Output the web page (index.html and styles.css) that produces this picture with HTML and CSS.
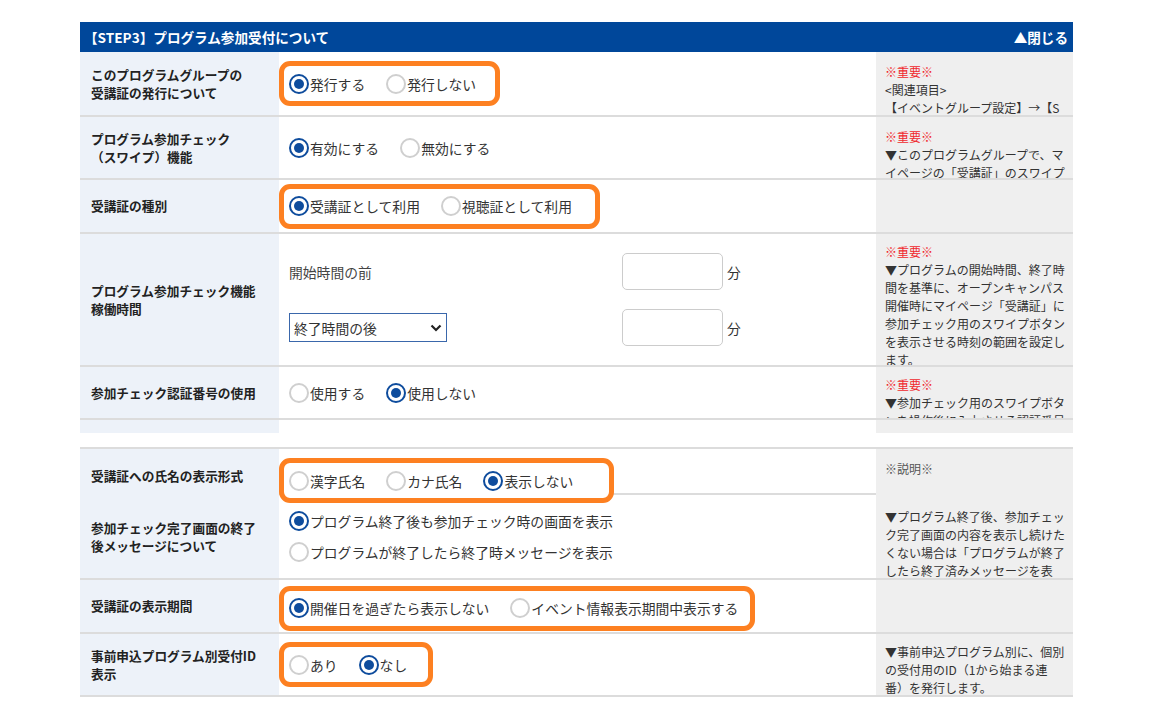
FILE: index.html
```html
<!DOCTYPE html>
<html lang="ja">
<head>
<meta charset="utf-8">
<title>STEP3 プログラム参加受付について</title>
<link rel="stylesheet" href="styles.css">
</head>
<body>
<div class="panel">
  <div class="panel-head">
    <span class="panel-title">【STEP3】プログラム参加受付について</span>
    <span class="panel-close">▲閉じる</span>
  </div>

  <div class="table">
    <div class="row h65">
      <div class="th">このプログラムグループの<br>受講証の発行について</div>
      <div class="td">
        <div class="opts hl hl-1">
          <span class="opt"><span class="radio on"></span>発行する</span>
          <span class="opt"><span class="radio"></span>発行しない</span>
        </div>
      </div>
      <div class="note"><span class="red">※重要※</span><br>&lt;関連項目&gt;<br>【イベントグループ設定】→【S</div>
    </div>

    <div class="row h63">
      <div class="th">プログラム参加チェック<br>（スワイプ）機能</div>
      <div class="td">
        <div class="opts">
          <span class="opt"><span class="radio on"></span>有効にする</span>
          <span class="opt"><span class="radio"></span>無効にする</span>
        </div>
      </div>
      <div class="note"><span class="red">※重要※</span><br>▼このプログラムグループで、マ<br>イページの「受講証」のスワイプ<br>ボタンを表示するかを設定します。</div>
    </div>

    <div class="row h54">
      <div class="th">受講証の種別</div>
      <div class="td">
        <div class="opts hl hl-3">
          <span class="opt"><span class="radio on"></span>受講証として利用</span>
          <span class="opt"><span class="radio"></span>視聴証として利用</span>
        </div>
      </div>
      <div class="note"></div>
    </div>

    <div class="row h133">
      <div class="th">プログラム参加チェック機能<br>稼働時間</div>
      <div class="td">
        <div class="time-grid">
          <span class="time-label">開始時間の前</span>
          <span class="num-input"></span>
          <span class="unit">分</span>
          <div class="select">
            <span>終了時間の後</span>
            <svg class="chev" width="12" height="8" viewBox="0 0 12 8"><path d="M1.5 1.5 L6 6 L10.5 1.5" fill="none" stroke="#222" stroke-width="2.2"/></svg>
          </div>
          <span class="num-input"></span>
          <span class="unit">分</span>
        </div>
      </div>
      <div class="note tight"><span class="red">※重要※</span><br>▼プログラムの開始時間、終了時<br>間を基準に、オープンキャンパス<br>開催時にマイページ「受講証」に<br>参加チェック用のスワイプボタン<br>を表示させる時刻の範囲を設定し<br>ます。</div>
    </div>

    <div class="row h53">
      <div class="th">参加チェック認証番号の使用</div>
      <div class="td">
        <div class="opts">
          <span class="opt"><span class="radio"></span>使用する</span>
          <span class="opt"><span class="radio on"></span>使用しない</span>
        </div>
      </div>
      <div class="note tight"><span class="red">※重要※</span><br>▼参加チェック用のスワイプボタ<br>ンを操作後に入力させる認証番号</div>
    </div>

    <div class="row h13 no-border">
      <div class="th"></div>
      <div class="td"></div>
      <div class="note"></div>
    </div>
  </div>

  <div class="table table-2">
    <div class="row h46">
      <div class="th">受講証への氏名の表示形式</div>
      <div class="td">
        <div class="opts hl hl-6">
          <span class="opt"><span class="radio"></span>漢字氏名</span>
          <span class="opt"><span class="radio"></span>カナ氏名</span>
          <span class="opt"><span class="radio on"></span>表示しない</span>
        </div>
      </div>
      <div class="note gray">※説明※</div>
    </div>

    <div class="row h85">
      <div class="th">参加チェック完了画面の終了<br>後メッセージについて</div>
      <div class="td">
        <div class="opts col">
          <span class="opt"><span class="radio on"></span>プログラム終了後も参加チェック時の画面を表示</span>
          <span class="opt"><span class="radio"></span>プログラムが終了したら終了時メッセージを表示</span>
        </div>
      </div>
      <div class="note loose">▼プログラム終了後、参加チェッ<br>ク完了画面の内容を表示し続けた<br>くない場合は「プログラムが終了<br>したら終了済みメッセージを表<br>示」を選択してください。</div>
    </div>

    <div class="row h54">
      <div class="th">受講証の表示期間</div>
      <div class="td">
        <div class="opts hl hl-8">
          <span class="opt"><span class="radio on"></span>開催日を過ぎたら表示しない</span>
          <span class="opt"><span class="radio"></span>イベント情報表示期間中表示する</span>
        </div>
      </div>
      <div class="note"></div>
    </div>

    <div class="row h63">
      <div class="th">事前申込プログラム別受付ID<br>表示</div>
      <div class="td">
        <div class="opts hl hl-9">
          <span class="opt"><span class="radio"></span>あり</span>
          <span class="opt"><span class="radio on"></span>なし</span>
        </div>
      </div>
      <div class="note tight">▼事前申込プログラム別に、個別<br>の受付用のID（1から始まる連<br>番）を発行します。</div>
    </div>
  </div>
</div>
</body>
</html>
```

FILE: styles.css
```css
* {
  box-sizing: border-box;
}

body {
  margin: 0;
  background: #ffffff;
  font-family: "Noto Sans CJK JP", "Noto Sans", sans-serif;
  color: #333333;
}

.panel {
  width: 993px;
  margin: 22px 0 0 80px;
}

.panel-head {
  height: 30px;
  background: #00479a;
  color: #ffffff;
  display: flex;
  align-items: center;
  justify-content: space-between;
  padding: 0 5px 0 4px;
  font-size: 13.6px;
  font-weight: 700;
  line-height: 18px;
}

.table-2 {
  margin-top: 14px;
  border-top: 2px solid #dcdcdc;
}

.row {
  display: grid;
  grid-template-columns: 199px 597px 197px;
  border-bottom: 2px solid #dcdcdc;
}

.row.no-border {
  border-bottom: 0;
}

.h13 { height: 13px; }
.h46 { height: 46px; }
.h53 { height: 53px; }
.h54 { height: 54px; }
.h63 { height: 63px; }
.h65 { height: 65px; }
.h85 { height: 85px; }
.h133 { height: 133px; }

.th {
  background: #edf2f9;
  display: flex;
  align-items: center;
  padding-left: 11px;
  font-size: 12.7px;
  line-height: 18px;
  font-weight: 700;
  color: #222222;
}

.td {
  display: flex;
  align-items: center;
  padding-left: 10px;
  font-size: 13.8px;
  line-height: 20px;
  color: #333333;
}

.note {
  background: #efefef;
  padding: 11px 4px 0 9px;
  overflow: hidden;
  white-space: nowrap;
  font-size: 12px;
  line-height: 18px;
  color: #333333;
}

.note.tight {
  padding-top: 9px;
}

.note.loose {
  padding-top: 13px;
}

.note.gray {
  color: #555555;
}

.red {
  color: #f0282d;
}

.opts {
  display: flex;
  align-items: center;
  gap: 21px;
}

.opts.col {
  flex-direction: column;
  align-items: flex-start;
  gap: 11px;
}

.opt {
  display: flex;
  align-items: center;
  white-space: nowrap;
}

.radio {
  position: relative;
  flex: none;
  width: 20px;
  height: 20px;
  border-radius: 50%;
  border: 2px solid #cfcfcf;
  background: #ffffff;
  margin-right: 1px;
}

.radio.on {
  border-color: #0e4c9d;
}

.radio.on::after {
  content: "";
  position: absolute;
  inset: 3px;
  border-radius: 50%;
  background: #0e4c9d;
}

.hl {
  height: 45px;
  margin-left: -10px;
  padding-left: 5px;
  border: 5px solid #fd8021;
  border-radius: 11px;
  background: #ffffff;
}

.hl-1 { width: 221px; }
.hl-3 { width: 321px; }
.hl-6 { width: 335px; margin-top: 9px; }
.hl-8 { width: 476px; margin-top: 4px; }
.hl-9 { width: 154px; }

.time-grid {
  display: grid;
  grid-template-columns: 333px 101px auto;
  row-gap: 19px;
  align-items: center;
}

.time-label {
  color: #444444;
}

.num-input {
  display: block;
  width: 101px;
  height: 37px;
  border: 1px solid #cccccc;
  border-radius: 5px;
  background: #ffffff;
}

.unit {
  margin-left: 4px;
  color: #333333;
}

.select {
  width: 158px;
  height: 29px;
  border: 1px solid #3a67ab;
  display: flex;
  align-items: center;
  justify-content: space-between;
  padding: 0 4px 0 4px;
  color: #333333;
  background: #ffffff;
}

.chev {
  display: block;
}
```
